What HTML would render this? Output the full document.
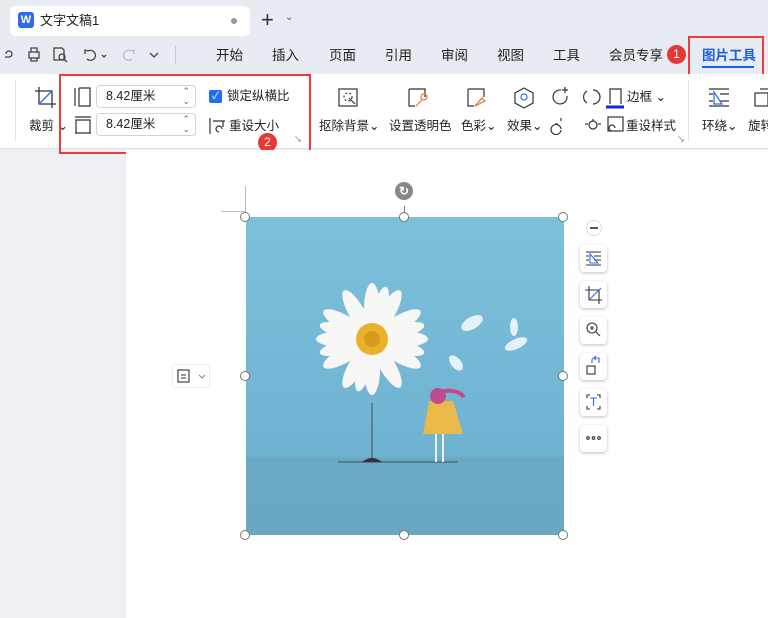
<!DOCTYPE html>
<html><head><meta charset="utf-8"><style>
*{margin:0;padding:0;box-sizing:border-box}
body{width:768px;height:618px;overflow:hidden;background:#eef0f4;font-family:"Liberation Sans","Noto Sans CJK SC",sans-serif;font-size:13px;color:#222;position:relative}
.a{position:absolute}
.t{position:absolute;white-space:nowrap;line-height:1.15}
.menu .t{top:48px;font-size:13.5px;color:#222}
.rib{position:absolute;left:0;top:74px;width:768px;height:75px;background:#fff;border-bottom:1px solid #dcdfe5}
.lbl{position:absolute;font-size:12.5px;color:#222;white-space:nowrap;line-height:1.15}
.inp{position:absolute;left:96px;width:100px;height:23px;border:1px solid #cfd3da;border-radius:4px;background:#fff;font-size:12.5px;padding:3px 0 0 9px;line-height:1.15}
.hd{position:absolute;width:10px;height:10px;border:1px solid #777;border-radius:50%;background:#fff}
.sb{position:absolute;left:580px;width:27px;height:27px;background:#fff;border-radius:4px;box-shadow:0 1px 3px rgba(0,0,0,.25)}
</style></head><body>
<div class="a" style="left:0;top:0;width:768px;height:74px;background:#e8ebf1"></div>
<div class="a" style="left:10px;top:6px;width:240px;height:30px;background:#fff;border-radius:6px"></div>
<div class="a" style="left:18px;top:12px;width:16px;height:16px;background:#2f6bf0;border-radius:3px;color:#fff;font-weight:bold;font-size:11px;text-align:center;line-height:16px">W</div>
<div class="t" style="left:40px;top:14px;font-size:13px">文字文稿1</div>
<div class="a" style="left:231px;top:18px;width:6px;height:6px;border-radius:50%;background:#999"></div>
<div class="t" style="left:261px;top:7px;font-size:22px;color:#333">+</div>
<div class="t" style="left:285px;top:12px;font-size:10px;color:#555">⌄</div>
<svg class="a" style="left:0;top:44px" width="170" height="22" fill="none" stroke="#444" stroke-width="1.3">
<path d="M6 10a3 3 0 1 1 3 3h-4"/><rect x="29" y="8" width="10" height="6"/><path d="M31 8V4h6v4M31 14v3h6v-3"/>
<path d="M54 4h8l2 2v10h-10z"/><circle cx="62" cy="13" r="3"/><path d="M64 15l3 3"/>
<path d="M88 7a5 5 0 1 1-1 8M88 7l-3-1v4"/><path d="M102 11l2 2 2-2"/>
<path stroke="#bbb" d="M131 7a5 5 0 1 0 1 8M131 7l3-1v4"/><path d="M150 9l4 4 4-4"/></svg>
<div class="a" style="left:175px;top:46px;width:1px;height:18px;background:#ccc"></div>
<div class="menu">
<div class="t" style="left:216px">开始</div><div class="t" style="left:272px">插入</div><div class="t" style="left:329px">页面</div><div class="t" style="left:385px">引用</div><div class="t" style="left:441px">审阅</div><div class="t" style="left:497px">视图</div><div class="t" style="left:553px">工具</div><div class="t" style="left:609px">会员专享</div>
<div class="t" style="left:702px;color:#1f5fe0;font-weight:bold">图片工具</div>
</div>
<div class="a" style="left:702px;top:66px;width:52px;height:2px;background:#1f5fe0"></div>
<div class="a" style="left:667px;top:45px;width:19px;height:19px;border-radius:50%;background:#e53935;color:#fff;font-size:12px;text-align:center;line-height:19px">1</div>
<div class="a" style="left:688px;top:36px;width:76px;height:41px;border:2px solid #ef3b3b"></div>
<div class="rib"></div>
<div class="a" style="left:15px;top:80px;width:1px;height:62px;background:#e2e4e8"></div>
<svg class="a" style="left:34px;top:86px" width="24" height="24" fill="none" stroke="#333" stroke-width="1.3"><path d="M5 1v17h17M1 5h17v17"/><path stroke="#2f6bf0" d="M5 18L18 5"/></svg>
<div class="lbl" style="left:29px;top:119px">裁剪 ⌄</div>
<svg class="a" style="left:74px;top:87px" width="18" height="50" fill="none" stroke="#333" stroke-width="1.2"><path d="M1 1v18M5 1v18h11V1H5"/><path d="M1 30h16M1 46h16M2 33h14v13H2z"/></svg>
<div class="inp" style="top:85px">8.42厘米<span style="position:absolute;right:5px;top:0;font-size:9px;line-height:10px;color:#666">⌃<br>⌄</span></div>
<div class="inp" style="top:113px">8.42厘米<span style="position:absolute;right:5px;top:0;font-size:9px;line-height:10px;color:#666">⌃<br>⌄</span></div>
<div class="a" style="left:209px;top:90px;width:13px;height:13px;background:#1f6ff0;border-radius:2px;color:#fff;font-size:10px;line-height:13px;text-align:center">✓</div>
<div class="lbl" style="left:227px;top:89px">锁定纵横比</div>
<svg class="a" style="left:209px;top:117px" width="18" height="18" fill="none" stroke="#333" stroke-width="1.2"><path d="M1 1v16M4 4h12M14 4v6M10 15a3 3 0 1 1 3-3"/></svg>
<div class="lbl" style="left:229px;top:119px">重设大小</div>
<div class="a" style="left:258px;top:133px;width:19px;height:19px;border-radius:50%;background:#e53935;color:#fff;font-size:12px;text-align:center;line-height:19px">2</div>
<div class="a" style="left:59px;top:74px;width:252px;height:80px;border:2px solid #ef3b3b"></div>
<div class="t" style="left:294px;top:135px;font-size:8px;color:#777">↘</div>
<svg class="a" style="left:336px;top:86px" width="360" height="52" fill="none" stroke="#333" stroke-width="1.2">
<rect x="3" y="3" width="18" height="17"/><circle cx="12" cy="11" r="4" stroke-dasharray="2 2"/><path d="M13 12l6 6"/>
<path d="M73 3h16v8M73 3v17h6"/><path stroke="#e8702a" d="M80 20l6-6"/><circle stroke="#e8702a" cx="88" cy="11" r="3"/>
<path d="M132 3h16v8M132 3v17h6"/><path stroke="#e8702a" d="M139 20l7-8 3 3z"/>
<path d="M188 2l9 5v10l-9 5-9-5V7z"/><circle stroke="#2f6bf0" cx="188" cy="11" r="3"/>
<path d="M225 4a7 7 0 1 0 6 6M229 1v6M226 4h6"/><path d="M257 4a7 7 0 1 1 0 14"/><path d="M251 5a7 7 0 0 0 0 12"/>
<path d="M274 18V3h11v15"/><path stroke="#1a22d8" stroke-width="3" d="M270 21h18"/>
<path d="M225 32v3M219 38h3M225 44a5 5 0 1 1 0-1"/><path d="M249 38h3M262 38h3M257 33v2"/><circle cx="257" cy="39" r="4"/>
<rect x="272" y="31" width="15" height="14"/><path d="M276 45a3 3 0 1 1 3-3"/></svg>
<div class="lbl" style="left:627px;top:90px">边框 ⌄</div>
<div class="lbl" style="left:319px;top:119px">抠除背景⌄</div>
<div class="lbl" style="left:389px;top:119px">设置透明色</div>
<div class="lbl" style="left:461px;top:119px">色彩⌄</div>
<div class="lbl" style="left:507px;top:119px">效果⌄</div>
<div class="lbl" style="left:626px;top:119px">重设样式</div>
<div class="t" style="left:677px;top:135px;font-size:8px;color:#777">↘</div>
<div class="a" style="left:688px;top:80px;width:1px;height:62px;background:#e2e4e8"></div>
<svg class="a" style="left:708px;top:87px" width="60" height="24" fill="none" stroke="#333" stroke-width="1.2"><path d="M1 2h20M1 19h20M12 7h9M12 14h9M1 7h4M1 14h4"/><path stroke="#2f6bf0" d="M6 5v12h8z"/><rect x="47" y="6" width="13" height="13"/><path d="M52 2h8"/></svg>
<div class="lbl" style="left:702px;top:119px">环绕⌄</div>
<div class="lbl" style="left:748px;top:119px">旋转</div>
<div class="a" style="left:126px;top:150px;width:642px;height:468px;background:#fff"></div>
<div class="a" style="left:221px;top:211px;width:25px;height:1px;background:#bbb"></div>
<div class="a" style="left:245px;top:186px;width:1px;height:25px;background:#bbb"></div>
<div class="a" style="left:246px;top:217px;width:318px;height:318px;background:linear-gradient(#7dc0da,#6fb3d2 75%,#6aa8c4 76%,#6aa7c2);overflow:hidden">
<svg width="318" height="318">
<g transform="translate(126,122)">
<g fill="#f7f7f5">
<ellipse cx="0" cy="-30" rx="8" ry="26"/><ellipse cx="0" cy="30" rx="8" ry="26"/><ellipse cx="-30" cy="0" rx="26" ry="8"/><ellipse cx="30" cy="0" rx="26" ry="8"/>
<ellipse cx="0" cy="-30" rx="8" ry="26" transform="rotate(30)"/><ellipse cx="0" cy="-30" rx="8" ry="26" transform="rotate(60)"/><ellipse cx="0" cy="-30" rx="8" ry="26" transform="rotate(120)"/><ellipse cx="0" cy="-30" rx="8" ry="26" transform="rotate(150)"/><ellipse cx="0" cy="-30" rx="8" ry="26" transform="rotate(210)"/><ellipse cx="0" cy="-30" rx="8" ry="26" transform="rotate(240)"/><ellipse cx="0" cy="-30" rx="8" ry="26" transform="rotate(300)"/><ellipse cx="0" cy="-30" rx="8" ry="26" transform="rotate(330)"/>
<ellipse cx="0" cy="-30" rx="7" ry="24" transform="rotate(15)"/><ellipse cx="0" cy="-30" rx="7" ry="24" transform="rotate(75)"/><ellipse cx="0" cy="-30" rx="7" ry="24" transform="rotate(105)"/><ellipse cx="0" cy="-30" rx="7" ry="24" transform="rotate(195)"/><ellipse cx="0" cy="-30" rx="7" ry="24" transform="rotate(255)"/><ellipse cx="0" cy="-30" rx="7" ry="24" transform="rotate(285)"/>
</g>
<circle r="16" fill="#e9b22a"/><circle r="8" fill="#d79a1a"/></g>
<g fill="#e6f1f7"><ellipse cx="226" cy="106" rx="12" ry="6" transform="rotate(-30 226 106)"/><ellipse cx="268" cy="110" rx="4" ry="9"/><ellipse cx="270" cy="127" rx="12" ry="5" transform="rotate(-25 270 127)"/><ellipse cx="210" cy="146" rx="5" ry="9" transform="rotate(-40 210 146)"/></g>
<path d="M126 186v58M92 245h120" stroke="#333" stroke-width="0.8" fill="none"/>
<path d="M116 245q10-8 20 0z" fill="#333"/>
<path d="M183 184h24l10 33h-40z" fill="#e9b94a"/><circle cx="192" cy="179" r="8" fill="#c04a8c"/><path d="M190 176q20-6 28 4" stroke="#c04a8c" stroke-width="4" fill="none"/>
<path d="M190 217v28M197 217v28" stroke="#eee" stroke-width="2"/></svg></div>
<div class="a" style="left:404px;top:206px;width:1px;height:10px;background:#777"></div>
<div class="a" style="left:395px;top:182px;width:18px;height:18px;border-radius:50%;background:#888;color:#fff;font-size:12px;text-align:center;line-height:18px;font-weight:bold">↻</div>
<div class="hd" style="left:240px;top:212px"></div><div class="hd" style="left:399px;top:212px"></div><div class="hd" style="left:558px;top:212px"></div>
<div class="hd" style="left:240px;top:371px"></div><div class="hd" style="left:558px;top:371px"></div>
<div class="hd" style="left:240px;top:530px"></div><div class="hd" style="left:399px;top:530px"></div><div class="hd" style="left:558px;top:530px"></div>
<div class="a" style="left:172px;top:364px;width:38px;height:24px;border:1px solid #eee;border-radius:3px;background:#fff"></div>
<svg class="a" style="left:176px;top:368px" width="32" height="16" fill="none" stroke="#333" stroke-width="1.1"><rect x="2" y="2" width="11" height="12"/><path d="M5 7h5M5 10h5"/><path stroke="#888" d="M23 7l3 3 3-3"/></svg>
<div class="a" style="left:586px;top:220px;width:16px;height:16px;border-radius:50%;border:1px solid #ddd;background:#fff"></div><div class="a" style="left:590px;top:227px;width:8px;height:2px;background:#555"></div>
<div class="sb" style="top:245px"></div><div class="sb" style="top:281px"></div><div class="sb" style="top:317px"></div><div class="sb" style="top:353px"></div><div class="sb" style="top:389px"></div><div class="sb" style="top:425px"></div>
<svg class="a" style="left:580px;top:245px" width="27" height="210" fill="none" stroke="#333" stroke-width="1.1">
<path d="M6 7h15M6 20h15M14 11h7M14 15h7M6 11h3M6 15h3"/><path stroke="#2f6bf0" d="M10 9v9h8z"/>
<path d="M9 41v14h13M5 45h14v14"/><path stroke="#2f6bf0" d="M9 55l12-12"/>
<circle cx="12" cy="83" r="5"/><path d="M16 87l4 4M10 83h4M12 81v4"/>
<rect x="7" y="121" width="8" height="8"/><path stroke="#2f6bf0" d="M12 118v-3a2 2 0 0 1 2-2h5v5M16 115l-2-2 2-2"/>
<path d="M7 153v-3h3M17 150h3v3M7 161v3h3M17 164h3v-3"/><path stroke="#2f6bf0" d="M10 153h7M13.5 153v8"/>
<circle cx="8" cy="193" r="1.3"/><circle cx="13.5" cy="193" r="1.3"/><circle cx="19" cy="193" r="1.3"/></svg>
</body></html>
